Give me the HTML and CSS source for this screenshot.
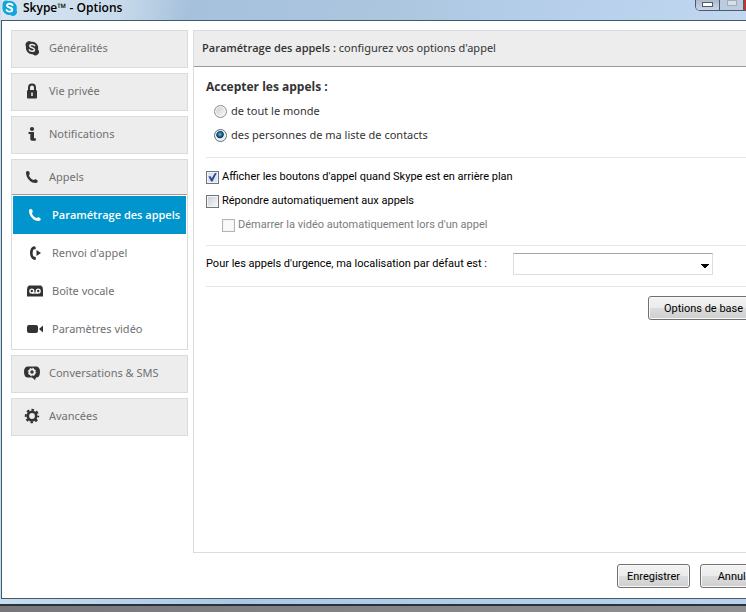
FILE: index.html
```html
<!DOCTYPE html>
<html lang="fr">
<head>
  <meta charset="UTF-8" />
  <meta name="viewport" content="width=device-width, initial-scale=1.0" />
  <title>Skype™ - Options</title>
  <link rel="stylesheet" href="styles.css">
</head>
<body>
  <div class="window">
    <header class="titlebar">
      <svg class="logo" viewBox="0 0 16 16"><path d="M1 4a4 4 0 0 1 6-3 7 7 0 0 1 8 9 4 4 0 0 1-6 5A7 7 0 0 1 1 7z" fill="#12a5dc"/><path d="M11 5.200C10 3.200 5.300 3.300 5.500 5.700c.2 2.200 5.300 1.400 5.300 4 0 2.500-5 2.400-5.900.3" fill="none" stroke="#fff" stroke-width="1.900" stroke-linecap="round"/></svg>
      <h1>Skype™ - Options</h1>
      <div class="controls">
        <button class="control" aria-label="Réduire"><span class="glyph-min"></span></button>
        <button class="control dim" aria-label="Agrandir"><span class="glyph-max"></span></button>
        <button class="control close" aria-label="Fermer"></button>
      </div>
    </header>

    <div class="client">
      <div class="columns">
        <nav class="sidebar">
          <a class="item" href="#general">
            <svg class="icon" viewBox="0 0 16 16"><path d="M1.500 5a3.500 3.500 0 0 1 5.500-3.200A6.200 6.200 0 0 1 14 9.500a3.500 3.500 0 0 1-5.200 4.700A6.200 6.200 0 0 1 2 7z" fill="#333"/><path d="M10.700 5.700C9.800 4 5.800 4 5.800 6c0 2.100 4.700 1.400 4.700 3.700 0 2.100-4.300 2-5.200.2" fill="none" stroke="#eee" stroke-width="1.500" stroke-linecap="round"/></svg>
            Généralités
          </a>
          <a class="item" href="#privacy">
            <svg class="icon" viewBox="0 0 16 16"><path d="M5 8V4.500a3 3 0 0 1 6 0V8" fill="none" stroke="#333" stroke-width="2"/><rect x="3" y="7" width="10" height="8.500" rx="1" fill="#333"/><path d="M8 9.500v3.500" stroke="#eee" stroke-width="1.500"/></svg>
            Vie privée
          </a>
          <a class="item" href="#notifications">
            <svg class="icon" viewBox="0 0 16 16"><circle cx="8" cy="3" r="2.100" fill="#333"/><path d="M4.500 6H10v6.300H11.800V14.800H8A1.700 1.700 0 0 1 6.300 13V8H4.500z" fill="#333"/></svg>
            Notifications
          </a>
          <div class="group">
            <a class="item group-head" href="#calls">
              <svg class="icon" viewBox="0 0 16 16"><path d="M2 3.500C2 2 4 1.500 5 2.500c1 1.500 1 2.500 0 3.500 0 2 2.500 4.500 4.700 5 1.200-1.200 2.500-.8 3.800.5.700 1-.3 2.500-1.800 2.500C6.500 14 2 9 2 3.500z" fill="#333"/></svg>
              Appels
            </a>
            <a class="subitem selected" href="#call-settings">
              <svg class="icon" viewBox="0 0 16 16"><path d="M2 3.500C2 2 4 1.500 5 2.500c1 1.500 1 2.500 0 3.500 0 2 2.500 4.500 4.700 5 1.200-1.200 2.500-.8 3.800.5.700 1-.3 2.500-1.800 2.500C6.500 14 2 9 2 3.500z" fill="#fff"/></svg>
              Paramétrage des appels
            </a>
            <a class="subitem" href="#forwarding">
              <svg class="icon" viewBox="0 0 16 16"><path d="M7.500 1.200C4 1.500 3 5 3 8s1.500 6.500 5 7c1.300-.3 1.200-2.700.2-3.300-1 .2-1.500 0-2-.7-.7-1.500-.7-4 0-6 .5-.8 1.300-.7 2-.5 1-.8.5-3-.7-3.300z" fill="#333"/><path d="M9.500 5L14 8l-4.500 3z" fill="#333"/></svg>
              Renvoi d'appel
            </a>
            <a class="subitem" href="#voicemail">
              <svg class="icon" viewBox="0 0 16 16"><path d="M2 2.500h12q2 1 2 4v7H0v-7q0-3 2-4z" fill="#333"/><circle cx="4.800" cy="8" r="1.900" fill="none" stroke="#fff" stroke-width="1.400"/><circle cx="11.200" cy="8" r="1.900" fill="none" stroke="#fff" stroke-width="1.400"/><path d="M4.800 10h6.400" stroke="#fff" stroke-width="1.300"/></svg>
              Boîte vocale
            </a>
            <a class="subitem" href="#video">
              <svg class="icon" viewBox="0 0 16 16"><rect x="0" y="4" width="11" height="8" rx="2" fill="#333"/><path d="M12 8l4-3.500v7z" fill="#333"/></svg>
              Paramètres vidéo
            </a>
          </div>
          <a class="item" href="#sms">
            <svg class="icon" viewBox="0 0 16 16"><path d="M4 1.500h8q4 0 4 5.500t-4 5.500l-1 2.500-3-2.500H4Q0 12.500 0 7t4-5.500z" fill="#333"/><circle cx="8" cy="7" r="2.600" fill="none" stroke="#eee" stroke-width="1.800"/><circle cx="8" cy="7" r="3.800" fill="none" stroke="#eee" stroke-width="1" stroke-dasharray="1.500 1.485"/></svg>
            Conversations &amp; SMS
          </a>
          <a class="item" href="#advanced">
            <svg class="icon" viewBox="0 0 16 16"><circle cx="8" cy="8" r="4.200" fill="none" stroke="#333" stroke-width="2.600"/><circle cx="8" cy="8" r="6.200" fill="none" stroke="#333" stroke-width="2" stroke-dasharray="2.600 2.270" stroke-dashoffset="1.300"/></svg>
            Avancées
          </a>
        </nav>

        <main class="panel">
          <h2 class="panel-title"><b>Paramétrage des appels :</b> configurez vos options d'appel</h2>
          <form class="options" id="options">
            <fieldset class="section accept">
              <legend>Accepter les appels :</legend>
              <label class="choice"><input type="radio" name="accept">de tout le monde</label>
              <label class="choice"><input type="radio" name="accept" checked>des personnes de ma liste de contacts</label>
            </fieldset>
            <div class="section checks">
              <label class="check"><input type="checkbox" checked>Afficher les boutons d'appel quand Skype est en arrière plan</label>
              <label class="check"><input type="checkbox">Répondre automatiquement aux appels</label>
              <label class="check sub"><input type="checkbox" disabled>Démarrer la vidéo automatiquement lors d'un appel</label>
            </div>
            <div class="section location">
              <label for="place">Pour les appels d'urgence, ma localisation par défaut est :</label>
              <select id="place"><option></option></select>
            </div>
            <div class="basic">
              <button type="button" class="btn wide">Options de base</button>
            </div>
          </form>
        </main>
      </div>

      <footer class="actions">
        <button type="submit" form="options" class="btn">Enregistrer</button>
        <button type="button" class="btn">Annuler</button>
      </footer>
    </div>
  </div>
</body>
</html>
```
FILE: styles.css
```css
:root {
  --skype: #0095cc;
  --grey: #ededed;
  --line: #d8dcde;
  --text: #333;
  --muted: #707070;
  --ui: Roboto, sans-serif;
}
* { box-sizing: border-box; }
body {
  margin: 0;
  height: 100vh;
  padding-bottom: 6px;
  overflow: hidden;
  display: flex;
  background: linear-gradient(90deg, #77777b, #908f91);
  font-family: "Noto Sans", sans-serif;
  font-size: 11px;
  line-height: 16px;
  color: var(--text);
}
/* the window runs past the right edge of the desktop */
.window {
  flex: none;
  width: calc(100% + 40px);
  display: flex;
  flex-direction: column;
  padding: 0 1px 5px;
  border-bottom: 2px solid #27333d;
  background: linear-gradient(90deg, #c9dcee, #abc8e2 30%, #bcd3ec);
}
.titlebar {
  height: 20px;
  display: flex;
  align-items: flex-start;
  background: linear-gradient(100deg, #d8e5f0, #c9dbeb 15%, #a6c1dc 24%, #acc6e0 50%, #b8d0ec 75%, #c4d9f1);
}
.logo { width: 17px; height: 16px; margin-right: 5px; }
.titlebar h1 {
  margin: 0;
  flex: 1;
  font-family: "Open Sans", sans-serif;
  font-size: 12px;
  font-weight: 600;
  line-height: 16px;
  color: #000;
}
.controls {
  display: flex;
  height: 11px;
  margin-right: 4px;
  border: 1px solid #4d5a70;
  border-top: 0;
  border-radius: 0 0 5px 5px;
  overflow: hidden;
}
.control {
  width: 24px;
  padding: 0;
  display: flex;
  justify-content: center;
  border: 0;
  border-right: 1px solid #4d5a70;
  background: linear-gradient(#aebacb, #c9d6e6);
}
.control.dim { background: #bccbdd; }
.control.close { width: 36px; border: 0; background: #b73a2c; }
.glyph-min { width: 11px; height: 5px; margin-top: 2px; border: 1px solid #4d5a70; background: #fff; }
.glyph-max { width: 10px; height: 6px; border: 1px solid #a2adba; background: #d6dfe9; }

.client {
  flex: 1;
  display: flex;
  flex-direction: column;
  border: 1px solid #3f5b6e;
  background: #fff;
}
.columns { flex: 1; display: flex; gap: 5px; padding: 9px 9px 0; }
.sidebar { width: 177px; display: flex; flex-direction: column; gap: 5px; }
.item, .subitem {
  height: 38px;
  display: flex;
  align-items: center;
  gap: 9px;
  padding-left: 12px;
  color: var(--muted);
  text-decoration: none;
}
.item { padding-bottom: 2px; border: 1px solid var(--line); background: var(--grey); }
.icon { width: 16px; height: 16px; flex: none; }
.group { border: 1px solid var(--line); padding-bottom: 1px; }
.group-head {
  height: 35px;
  margin-bottom: 1px;
  padding-bottom: 0;
  border: 0;
  border-bottom: 1px solid #a99;
}
.subitem { margin: 0 1px; padding-left: 14px; }
.selected { background: var(--skype); color: #fff; font-family: "Open Sans", sans-serif; font-weight: 600; }

.panel { flex: 1; border: 1px solid var(--line); }
.panel-title {
  margin: 0;
  padding: 9px 8px 10px;
  border-bottom: 1px solid #999;
  background: var(--grey);
  font-size: 11px;
  font-weight: 400;
}
.panel-title b { font-family: "Open Sans", sans-serif; font-weight: 600; }
.options { padding: 0 12px; }
.section { margin: 0; border: 0; border-bottom: 1px solid #e6e6e6; }
.accept { padding: 12px 0 10px; }
.accept legend {
  float: left;
  width: 100%;
  padding: 0;
  margin-bottom: 4px;
  font-family: "Open Sans", sans-serif;
  font-size: 12px;
  font-weight: 700;
}
.choice { clear: both; display: flex; align-items: center; gap: 4px; height: 24px; padding-left: 8px; }
.checks { padding: 7px 0 8px; font-family: var(--ui); color: #000; }
.check { display: flex; align-items: center; gap: 3px; height: 24px; }
.check.sub { padding-left: 16px; color: #7b7b7b; }

input { appearance: none; flex: none; width: 13px; height: 13px; margin: 0; border: 1px solid #70757a; background: linear-gradient(135deg, #c9ced3, #fafafa); }
input[type="radio"] { border-radius: 50%; border-color: #8c9094; box-shadow: inset 0 0 0 1px #f6f6f6; }
input[type="radio"]:checked { border-color: #52708a; background: radial-gradient(circle at 45% 40%, #6cc3e2 0, #154a70 30%, #123a5a 38%, #e8f0f5 48%); }
input[type="checkbox"] { box-shadow: inset 0 0 0 1px #f4f4f4; }
input[type="checkbox"]:checked {
  background: #dce4f0;
  display: grid;
  place-items: center;
}
input[type="checkbox"]:checked::before {
  content: "";
  width: 9px;
  height: 9px;
  background: #33499a;
  clip-path: polygon(5% 45%, 25% 40%, 42% 65%, 80% 0, 100% 0, 50% 100%, 35% 100%);
}
input[type="checkbox"]:disabled { border-color: #b5b5b5; background: #f9f9f9; }

.location { display: flex; align-items: center; height: 41px; padding-bottom: 4px; font-family: var(--ui); color: #000; }
.location label { width: 307px; flex: none; white-space: nowrap; }
select {
  appearance: none;
  width: 200px;
  height: 22px;
  border: 1px solid #ddd;
  border-top-color: #a5a5a5;
  border-radius: 0;
  background-color: #fff;
  background-image: linear-gradient(45deg, transparent 50%, #000 50%), linear-gradient(-45deg, transparent 50%, #000 50%);
  background-repeat: no-repeat;
  background-size: 4px 4px, 4px 4px;
  background-position: 187px 10px, 191px 10px;
}
.basic { display: flex; justify-content: flex-end; padding: 9px 3px; }
.btn {
  min-width: 73px;
  height: 24px;
  padding: 0;
  border: 1px solid #707070;
  border-radius: 3px;
  background: linear-gradient(#f3f3f3, #ebebeb 48%, #dcdcdc 52%, #cfcfcf);
  box-shadow: inset 0 0 0 1px #fafafa;
  font-family: var(--ui);
  font-size: 11px;
  color: #000;
}
.btn.wide { min-width: 111px; }
.actions { display: flex; justify-content: flex-end; gap: 10px; padding: 11px 11px 10px; }
```
